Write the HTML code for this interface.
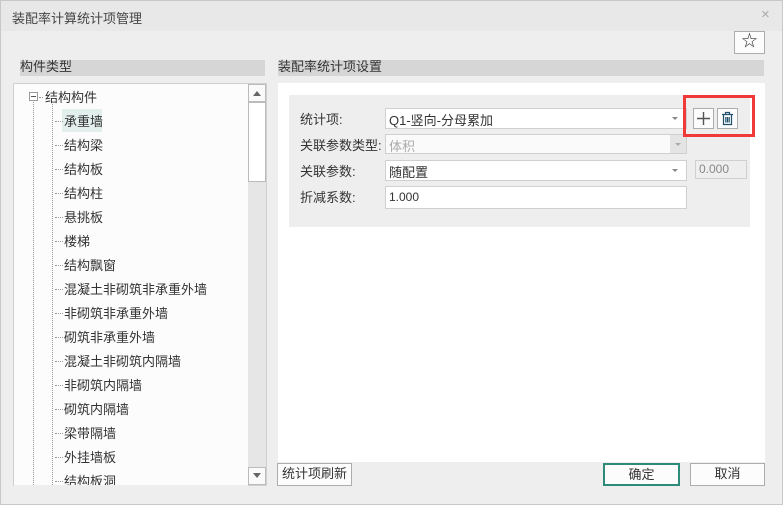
<!DOCTYPE html><html><head><meta charset="utf-8"><style>
*{box-sizing:border-box;margin:0;padding:0}
body{width:783px;height:505px;background:#eee;font-family:"Liberation Sans","Noto Sans CJK SC",sans-serif;font-size:13px;color:#333;position:relative;overflow:hidden}
.a{position:absolute}
.box{position:absolute;background:#fff;border:1px solid #d0d0d0}
.btn{position:absolute;background:#fcfcfc;border:1px solid #adadad;text-align:center;line-height:20px;font-size:13px}
.lab{position:absolute;left:300px;font-size:13px}
.t{position:absolute;left:64px;font-size:13px;color:#333}
.dl{position:absolute;width:8px;border-top:1px dotted #999;left:55px}
.arr{position:absolute;right:8px;top:8px;width:0;height:0;border-left:3px solid transparent;border-right:3px solid transparent;border-top:3px solid #888}
</style></head><body>
<div class="a" style="left:0;top:0;width:783px;height:505px;border:1px solid #c8c8c8"></div>
<div class="a" style="left:1px;top:1px;width:781px;height:30px;background:#e8e8e8"></div>
<div class="a" style="left:12px;top:8px;font-size:13px;color:#444">装配率计算统计项管理</div>
<div class="a" style="left:761px;top:6px;font-size:15px;color:#aaa">×</div>
<div class="a" style="left:8px;top:31px;width:766px;height:466px;background:#eee"></div>
<div class="btn" style="left:734px;top:31px;width:31px;height:23px;font-size:16px;line-height:20px">☆</div>
<div class="a" style="left:20px;top:60px;width:245px;height:16px;background:#d6d6d6"></div>
<div class="a" style="left:20px;top:60px;font-size:13px;line-height:14px">构件类型</div>
<div class="a" style="left:278px;top:60px;width:486px;height:16px;background:#d6d6d6"></div>
<div class="a" style="left:278px;top:60px;font-size:13px;line-height:14px">装配率统计项设置</div>
<div class="box" style="left:13px;top:83px;width:254px;height:403px;background:#fcfcfc"></div>
<div class="a" style="left:248px;top:84px;width:18px;height:401px;background:#e6e6e6"></div>
<div class="a" style="left:248px;top:84px;width:18px;height:18px;background:#fafafa;border:1px solid #bbb"></div>
<div class="a" style="left:253px;top:91px;border-left:4px solid transparent;border-right:4px solid transparent;border-bottom:5px solid #666"></div>
<div class="a" style="left:248px;top:102px;width:18px;height:80px;background:#fff;border:1px solid #bbb"></div>
<div class="a" style="left:248px;top:467px;width:18px;height:18px;background:#fafafa;border:1px solid #bbb"></div>
<div class="a" style="left:253px;top:473px;border-left:4px solid transparent;border-right:4px solid transparent;border-top:5px solid #666"></div>
<div class="a" style="left:29px;top:92px;width:9px;height:9px;border:1px solid #999;background:#fff"></div>
<div class="a" style="left:31px;top:96px;width:5px;height:1px;background:#555"></div>
<div class="a" style="left:39px;top:97px;width:4px;border-top:1px dotted #999"></div>
<div class="a" style="left:45px;top:87px">结构构件</div>
<div class="a" style="left:33px;top:102px;height:383px;border-left:1px dotted #999"></div>
<div class="a" style="left:52px;top:102px;height:383px;border-left:1px dotted #999"></div>
<div class="a" style="left:62px;top:109px;width:40px;height:23px;background:#e2efec"></div>
<div id="tr"></div>
<div class="box" style="left:278px;top:83px;width:487px;height:379px;border:none"></div>
<div class="a" style="left:289px;top:95px;width:461px;height:132px;background:#eee"></div>
<div class="lab" style="top:109px">统计项:</div>
<div class="lab" style="top:135px">关联参数类型:</div>
<div class="lab" style="top:161px">关联参数:</div>
<div class="lab" style="top:187px">折减系数:</div>
<div class="box" style="left:385px;top:108px;width:302px;height:21px;padding:1px 3px">Q1-竖向-分母累加<span class="arr"></span></div>
<div class="box" style="left:385px;top:134px;width:302px;height:20px;padding:1px 3px;background:#fafafa;color:#aaa">体积<span class="a" style="right:0;top:0;width:16px;height:18px;background:#e4e4e4"></span><span class="arr" style="border-top-color:#aaa;right:5px"></span></div>
<div class="box" style="left:385px;top:160px;width:302px;height:21px;padding:1px 3px">随配置<span class="arr"></span></div>
<div class="box" style="left:695px;top:160px;width:52px;height:19px;padding:1px 3px;background:#eee;color:#888;font-size:12px">0.000</div>
<div class="box" style="left:385px;top:186px;width:302px;height:23px;padding:3px 3px;font-size:12px">1.000</div>
<div class="btn" style="left:693px;top:108px;width:21px;height:21px"><svg width="19" height="19" style="position:absolute;left:0;top:0"><path d="M9.5 3v13M3 9.5h13" stroke="#555" stroke-width="1.4" fill="none"/></svg></div>
<div class="btn" style="left:717px;top:108px;width:21px;height:21px"><svg width="19" height="19" style="position:absolute;left:0;top:0"><path d="M4 5.5h11M7.5 5.5V3.5h4v2M5.5 5.5v10h8v-10M7.8 8v5.5M9.5 8v5.5M11.2 8v5.5" stroke="#1f4f6a" stroke-width="1.2" fill="none"/></svg></div>
<div class="a" style="left:683px;top:95px;width:72px;height:42px;border:3px solid #f03a3a"></div>
<div class="btn" style="left:277px;top:463px;width:75px;height:23px">统计项刷新</div>
<div class="btn" style="left:603px;top:463px;width:77px;height:23px;border:2px solid #2e8b7a">确定</div>
<div class="btn" style="left:690px;top:463px;width:75px;height:23px">取消</div>
<script>
var n=["承重墙","结构梁","结构板","结构柱","悬挑板","楼梯","结构飘窗","混凝土非砌筑非承重外墙","非砌筑非承重外墙","砌筑非承重外墙","混凝土非砌筑内隔墙","非砌筑内隔墙","砌筑内隔墙","梁带隔墙","外挂墙板","结构板洞"],h="";
n.forEach(function(s,i){var y=111+i*24;h+='<div class="dl" style="top:'+(y+10)+'px"></div><div class="t" style="top:'+y+'px">'+s+'</div>';});
document.getElementById("tr").innerHTML=h;
</script>
<div class="a" style="left:14px;top:485px;width:234px;height:12px;background:#eee"></div>
</body></html>
